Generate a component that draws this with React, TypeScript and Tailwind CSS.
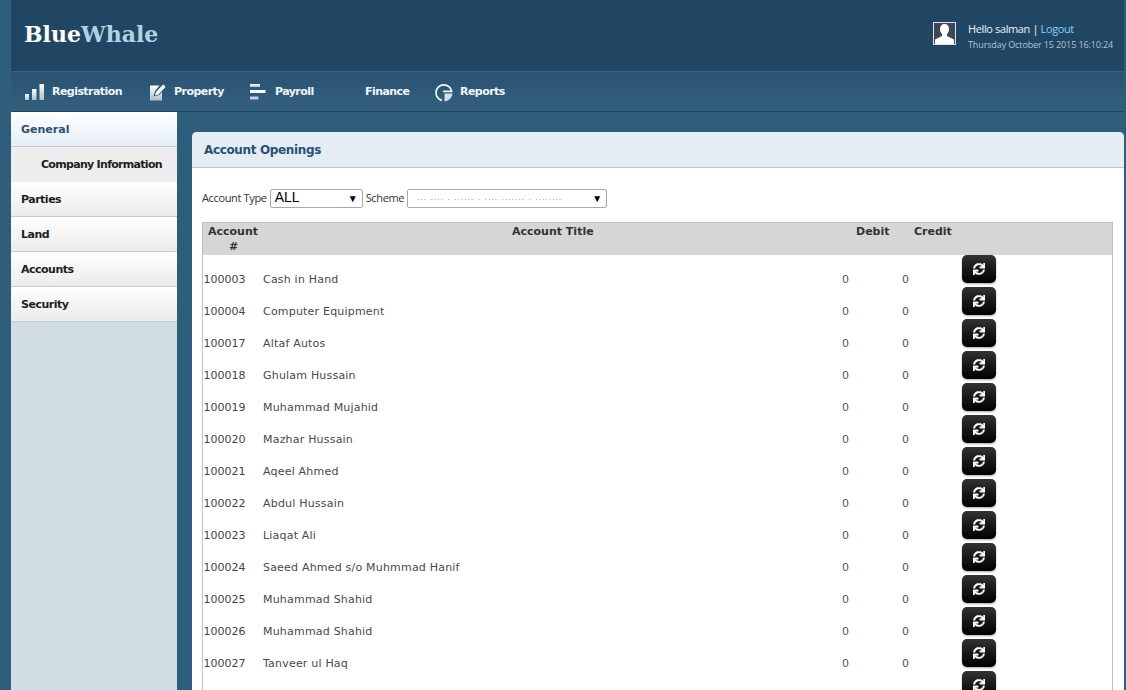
import React from "react";
import { FaSync } from "react-icons/fa";

const V = "font-['DejaVu_Sans','Verdana',sans-serif]";
const rows: [string, string][] = [
  ["100003", "Cash in Hand"],
  ["100004", "Computer Equipment"],
  ["100017", "Altaf Autos"],
  ["100018", "Ghulam Hussain"],
  ["100019", "Muhammad Mujahid"],
  ["100020", "Mazhar Hussain"],
  ["100021", "Aqeel Ahmed"],
  ["100022", "Abdul Hussain"],
  ["100023", "Liaqat Ali"],
  ["100024", "Saeed Ahmed s/o Muhmmad Hanif"],
  ["100025", "Muhammad Shahid"],
  ["100026", "Muhammad Shahid"],
  ["100027", "Tanveer ul Haq"],
  ["", ""],
];

function Grad() {
  return (
    <svg width="0" height="0" className="absolute">
      <defs>
        <linearGradient id="ng" x1="0" y1="0" x2="0" y2="1">
          <stop offset="0" stopColor="#ffffff" />
          <stop offset="1" stopColor="#aebfcb" />
        </linearGradient>
      </defs>
    </svg>
  );
}

function BarsIcon() {
  return (
    <svg width="20" height="18" viewBox="0 0 20 18" fill="url(#ng)">
      <rect x="1" y="11" width="4" height="6" />
      <rect x="8" y="6" width="4.500" height="11" />
      <rect x="15.500" y="1" width="4.500" height="16" />
    </svg>
  );
}
function EditIcon() {
  return (
    <svg width="17" height="18" viewBox="0 0 17 18">
      <path d="M1 2.500h9.500L6 8l-1.500 5.500L10 12l3-3v8.500H1z" fill="url(#ng)" />
      <path d="M6 12.500l1-3.500 6.500-7c1-1 3.500 1.300 2.500 2.500L9.500 11.500z" fill="#f4f7f9" />
    </svg>
  );
}
function LinesIcon() {
  return (
    <svg width="16" height="16" viewBox="0 0 16 16" fill="url(#ng)">
      <rect x="0" y="0" width="10" height="3" />
      <rect x="0" y="6" width="15.500" height="3" fill="#ffffff" />
      <rect x="0" y="12.500" width="8.500" height="3" fill="#c3d0d9" />
    </svg>
  );
}
function PieIcon() {
  return (
    <svg width="19" height="19" viewBox="0 0 18 18" fill="none" className="-ml-[2px]">
      <path d="M7.500 16.500A7.500 7.500 0 1 1 16.800 8H8.500" stroke="#f4f7f9" strokeWidth="1.600" />
      <path d="M10 10h7.500c0 3-3 7-7.500 7.500z" fill="#d6dfe5" />
    </svg>
  );
}

function NavItem({ icon, label, w, gap }: { icon?: React.ReactNode; label: string; w: number; gap: string }) {
  return (
    <div className="flex items-center" style={{ width: w }}>
      {icon && <span className={`flex w-[20px] justify-center ${gap}`}>{icon}</span>}
      <span className={`${V} text-[11px] font-bold tracking-[-0.55px] text-[#f1f6f9]`}>{label}</span>
    </div>
  );
}

function SideItem({ label, sub, active }: { label: string; sub?: boolean; active?: boolean }) {
  return (
    <div
      className={`${V} flex h-[35px] items-center border-b border-[#c8ccd0] text-[11px] font-bold ${
        active
          ? "bg-gradient-to-b from-[#ffffff] to-[#e4eef6] pt-[3px] pl-[10px] text-[#2b5078]"
          : sub
          ? "border-b-0 bg-[#eeeeee] pt-[1px] pl-[30px] tracking-[-0.7px] text-[#1d1d1d]"
          : "bg-gradient-to-b from-[#ffffff] to-[#ebebeb] pt-[3px] pl-[10px] tracking-[-0.5px] text-[#1d1d1d]"
      }`}
    >
      {label}
    </div>
  );
}

export default function App() {
  return (
    <div className="h-[690px] w-full overflow-hidden bg-[#2f5e7d] pl-[11px] pr-[2px]">
      <Grad />
      <header className="flex h-[71px] items-start justify-between bg-[#214663] pr-[10px]">
        <div className="mt-[19px] ml-[13px] font-['DejaVu_Serif',serif] text-[22px] leading-[30px] font-bold text-white">
          Blue<span className="text-[#b3d3e3]">Whale</span>
        </div>
        <div className="mt-[21px] flex items-start">
          <div className="mt-[1px] mr-[12px] flex h-[23px] w-[23px] items-end justify-center overflow-hidden border border-[#e2e2e2] bg-[#3d4757]">
            <svg width="21" height="21" viewBox="0 0 21 21" fill="#ffffff">
              <path d="M10.500 1c3 0 4.500 2 4.500 5 0 2.500-1 4-2 5v2l7 3.500V21H1v-4.500L8 13v-2c-1-1-2-2.500-2-5 0-3 1.500-5 4.500-5z" />
            </svg>
          </div>
          <div className="w-[146px] whitespace-nowrap font-['Open_Sans',sans-serif]">
            <div className="text-[11px] leading-[15px] tracking-[-0.38px] text-[#eaf3f8]">
              Hello salman | <span className="text-[#7fd4f4]">Logout</span>
            </div>
            <div className="mt-[2px] text-[9px] leading-[14px] tracking-[-0.12px] text-[#b3c5d2]">Thursday October 15 2015 16:10:24</div>
          </div>
        </div>
      </header>
      <nav className="flex h-[41px] items-center border-t border-b border-t-[#38607f] border-b-[#1f445e] bg-gradient-to-b from-[#2b5373] to-[#335f7f] pt-[1px] pl-[13px]">
        <NavItem icon={<BarsIcon />} label="Registration" w={123} gap="mr-[8px]" />
        <NavItem icon={<EditIcon />} label="Property" w={101} gap="mr-[7px]" />
        <NavItem icon={<LinesIcon />} label="Payroll" w={117} gap="mr-[7px]" />
        <NavItem label="Finance" w={69} gap="" />
        <NavItem icon={<PieIcon />} label="Reports" w={90} gap="mr-[6px]" />
      </nav>
      <div className="flex h-[578px] items-start">
        <aside className="h-full w-[166px] shrink-0 bg-[#d0dde4]">
          <SideItem label="General" active />
          <SideItem label="Company Information" sub />
          <SideItem label="Parties" />
          <SideItem label="Land" />
          <SideItem label="Accounts" />
          <SideItem label="Security" />
        </aside>
        <main className="mt-[20px] ml-[15px] flex-1 self-stretch rounded-t-[5px] bg-white">
          <div className={`${V} flex h-[36px] items-center rounded-t-[5px] border-b border-[#b4ccd6] bg-[#e4edf1] pl-[12px] text-[12px] font-bold tracking-[-0.35px] text-[#27507a]`}>
            Account Openings
          </div>
          <div className="mt-[20px] flex h-[20px] items-center pl-[10px] font-['Open_Sans',sans-serif] text-[11px] tracking-[-0.35px] text-[#333333]">
            <span>Account Type</span>
            <div className="ml-[3px] flex h-[19px] w-[93px] items-center justify-between rounded-[2px] border border-[#a9a9a9] bg-white pr-[4px] pl-[4px] font-['Liberation_Sans',sans-serif] text-[14px] tracking-normal text-black">
              <span className="-mt-[1px]">ALL</span>
              <span className="text-[10px]">▼</span>
            </div>
            <span className="ml-[3px]">Scheme</span>
            <div className="ml-[3px] flex h-[19px] w-[200px] items-center justify-between overflow-hidden rounded-[2px] border border-[#a9a9a9] bg-white pr-[4px] pl-[9px] tracking-normal text-black">
              <span className="whitespace-nowrap text-[7px] tracking-[1.55px] text-[#6a747c]">... .... . ...... . .... ....... . ........</span>
              <span className="text-[10px]">▼</span>
            </div>
          </div>
          <div className={`${V} mt-[14px] mr-[11px] ml-[10px] border border-b-0 border-[#c0c0c0] text-[11px] text-[#3f3f46]`}>
            <div className="flex h-[32px] bg-[#d6d6d6] pt-[1px] leading-[15px] font-bold text-[#333333]">
              <div className="w-[60px] shrink-0 pl-[5px]">
                <div>Account</div>
                <div className="pr-[4px] text-center">#</div>
              </div>
              <div className="w-[580px] shrink-0 pl-[249px]">Account Title</div>
              <div className="w-[71px] shrink-0 pl-[13px]">Debit</div>
              <div className="shrink-0">Credit</div>
            </div>
            {rows.map(([id, name], i) => (
              <div key={i} className="flex h-[32px]">
                <div className="w-[60px] shrink-0 pt-[18px] pl-[0.5px] leading-[13px] text-[#444444]">{id}</div>
                <div className="w-[579px] shrink-0 pt-[18px] leading-[13px] tracking-[0.2px] text-[#4a4650]">{name}</div>
                <div className="w-[60px] shrink-0 pt-[18px] leading-[13px] text-[#555555]">{id && "0"}</div>
                <div className="w-[60px] shrink-0 pt-[18px] leading-[13px] text-[#555555]">{id && "0"}</div>
                <button className="flex h-[28px] w-[34px] items-center justify-center rounded-[5px] bg-gradient-to-b from-[#333333] to-[#030303] shadow-[0_1px_2px_rgba(0,0,0,0.35)]">
                  <FaSync className="text-[12px] text-white" stroke="currentColor" strokeWidth={16} />
                </button>
              </div>
            ))}
          </div>
        </main>
      </div>
    </div>
  );
}
